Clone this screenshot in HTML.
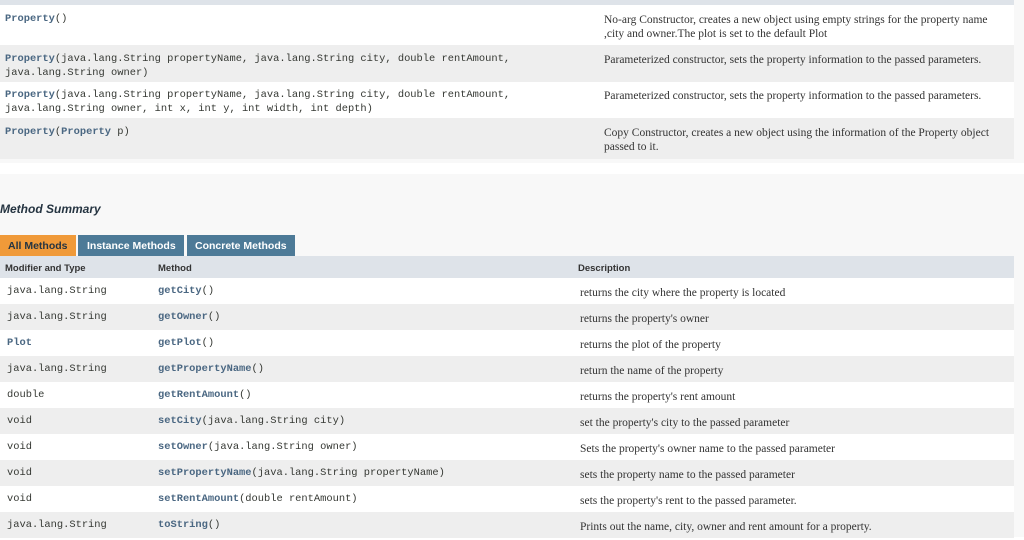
<!DOCTYPE html>
<html><head><style>
*{margin:0;padding:0;box-sizing:border-box}
body{width:1024px;height:537px;overflow:hidden;background:#fff;position:relative;font-family:"Liberation Sans",sans-serif}
.abs{position:absolute}
.mono{font-family:"Liberation Mono",monospace;font-size:10.4px;color:#353833;line-height:14px}
.lk{color:#4a6782;font-weight:bold}
.ser{font-family:"Liberation Serif",serif;font-size:11.5px;color:#333;line-height:14px}
.row{position:absolute;left:0;width:1014px}
.g{background:#eee}.w{background:#fff}
</style></head><body>
<div class="abs" style="left:0;top:0;width:1024px;height:173px;background:#f8f8f8"></div>
<div class="abs" style="left:0;top:163px;width:1024px;height:11px;background:#fff"></div>
<div class="row" style="top:0;height:5px;background:#dee3e9"></div>
<div class="row w" style="top:5px;height:40px"></div>
<div class="row g" style="top:45px;height:37px"></div>
<div class="row w" style="top:82px;height:36px"></div>
<div class="row g" style="top:118px;height:41px"></div>

<div class="abs mono" style="left:5px;top:12px"><span class="lk">Property</span>()</div>
<div class="abs mono" style="left:5px;top:52px"><span class="lk">Property</span>(java.lang.String propertyName, java.lang.String city, double rentAmount,<br>java.lang.String owner)</div>
<div class="abs mono" style="left:5px;top:88px"><span class="lk">Property</span>(java.lang.String propertyName, java.lang.String city, double rentAmount,<br>java.lang.String owner, int x, int y, int width, int depth)</div>
<div class="abs mono" style="left:5px;top:125px"><span class="lk">Property</span>(<span class="lk">Property</span> p)</div>

<div class="abs ser" style="left:604px;top:13px">No-arg Constructor, creates a new object using empty strings for the property name<br>,city and owner.The plot is set to the default Plot</div>
<div class="abs ser" style="left:604px;top:53px">Parameterized constructor, sets the property information to the passed parameters.</div>
<div class="abs ser" style="left:604px;top:89px">Parameterized constructor, sets the property information to the passed parameters.</div>
<div class="abs ser" style="left:604px;top:126px">Copy Constructor, creates a new object using the information of the Property object<br>passed to it.</div>

<div class="abs" style="left:0;top:174px;width:1024px;height:363px;background:#f8f8f8"></div>
<div class="abs" style="left:0;top:202px;font-size:12px;font-weight:bold;font-style:italic;color:#253441">Method Summary</div>
<div class="abs" style="left:0;top:235px;width:76px;height:21px;background:#f09a39;color:#253441;font-size:10.5px;font-weight:bold;line-height:22px;padding-left:8px">All Methods</div>
<div class="abs" style="left:78px;top:235px;width:106px;height:21px;background:#4d7a97;color:#fff;font-size:10.5px;font-weight:bold;line-height:22px;padding-left:9px">Instance Methods</div>
<div class="abs" style="left:187px;top:235px;width:108px;height:21px;background:#4d7a97;color:#fff;font-size:10.5px;font-weight:bold;line-height:22px;padding-left:8px">Concrete Methods</div>
<div class="row" style="top:256px;height:22px;background:#dee3e9"></div>
<div class="abs" style="left:5px;top:263px;font-size:9.5px;font-weight:bold;color:#333">Modifier and Type</div>
<div class="abs" style="left:158px;top:263px;font-size:9.5px;font-weight:bold;color:#333">Method</div>
<div class="abs" style="left:578px;top:263px;font-size:9.5px;font-weight:bold;color:#333">Description</div>

<div class="row w" style="top:278px;height:26px"></div>
<div class="row g" style="top:304px;height:26px"></div>
<div class="row w" style="top:330px;height:26px"></div>
<div class="row g" style="top:356px;height:26px"></div>
<div class="row w" style="top:382px;height:26px"></div>
<div class="row g" style="top:408px;height:26px"></div>
<div class="row w" style="top:434px;height:26px"></div>
<div class="row g" style="top:460px;height:26px"></div>
<div class="row w" style="top:486px;height:26px"></div>
<div class="row g" style="top:512px;height:26px"></div>

<div class="abs mono" style="left:7px;top:278px;line-height:26px">java.lang.String<br>java.lang.String<br><span class="lk">Plot</span><br>java.lang.String<br>double<br>void<br>void<br>void<br>void<br>java.lang.String</div>
<div class="abs mono" style="left:158px;top:278px;line-height:26px"><span class="lk">getCity</span>()<br><span class="lk">getOwner</span>()<br><span class="lk">getPlot</span>()<br><span class="lk">getPropertyName</span>()<br><span class="lk">getRentAmount</span>()<br><span class="lk">setCity</span>(java.lang.String city)<br><span class="lk">setOwner</span>(java.lang.String owner)<br><span class="lk">setPropertyName</span>(java.lang.String propertyName)<br><span class="lk">setRentAmount</span>(double rentAmount)<br><span class="lk">toString</span>()</div>
<div class="abs ser" style="left:580px;top:280px;line-height:26px">returns the city where the property is located<br>returns the property's owner<br>returns the plot of the property<br>return the name of the property<br>returns the property's rent amount<br>set the property's city to the passed parameter<br>Sets the property's owner name to the passed parameter<br>sets the property name to the passed parameter<br>sets the property's rent to the passed parameter.<br>Prints out the name, city, owner and rent amount for a property.</div>
</body></html>
